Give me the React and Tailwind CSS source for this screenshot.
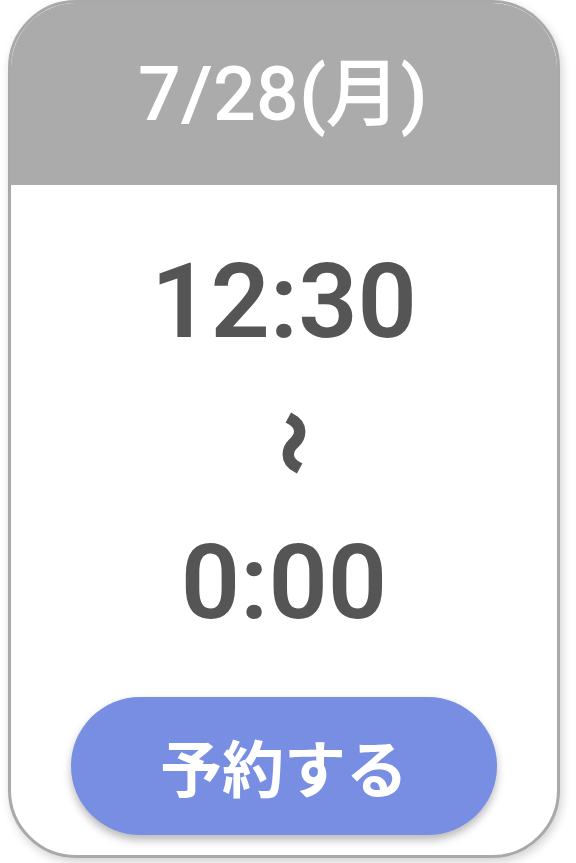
export default function App() {
  return (
    <div className="min-h-screen bg-white font-['Roboto','Noto_Sans_CJK_JP',sans-serif]">
      <div className="mx-2 flex h-[858px] w-[552px] flex-col overflow-hidden rounded-[68px] border-[3px] border-[#a9a9a9] bg-white shadow-[2px_4px_10px_rgba(0,0,0,0.18)]">
        <div className="flex h-[182px] shrink-0 items-center justify-center bg-[#ababab]">
          <span className="text-[73px] font-normal leading-none tracking-[2px] text-white [-webkit-text-stroke:2px_#ffffff]">7/28(月)</span>
        </div>
        <div className="flex flex-1 flex-col items-center pt-[65px]">
          <div className="text-[104px] font-semibold leading-none text-[#555555]">12:30</div>
          <div className="flex h-[177px] items-center justify-center">
            <span className="ml-[26px] inline-block rotate-90 text-[60px] font-bold leading-none text-[#555555] [-webkit-text-stroke:4px_#555555] font-['Noto_Sans_CJK_JP',sans-serif]">〜</span>
          </div>
          <div className="text-[104px] font-semibold leading-none text-[#555555]">0:00</div>
          <button className="mt-[62px] flex h-[138px] w-[426px] items-center justify-center rounded-full bg-[#788ee3] text-[62px] font-bold text-white shadow-[0_5px_8px_rgba(0,0,0,0.28)] font-['Noto_Sans_CJK_JP',sans-serif]">
            予約する
          </button>
        </div>
      </div>
    </div>
  );
}
